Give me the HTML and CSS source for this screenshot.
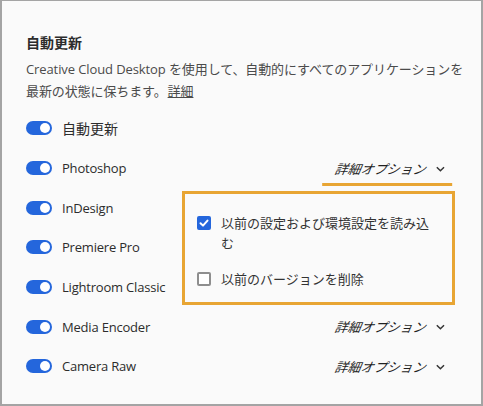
FILE: index.html
```html
<!DOCTYPE html>
<html lang="ja">
<head>
<meta charset="utf-8">
<link rel="stylesheet" href="styles.css">
</head>
<body>
<div class="panel">
  <h2 class="title">自動更新</h2>
  <p class="desc">Creative Cloud Desktop を使用して、自動的にすべてのアプリケーションを<br>最新の状態に保ちます。<a class="more">詳細</a></p>
  <ul class="rows">
    <li class="row"><span class="toggle"></span><span class="label jp">自動更新</span></li>
    <li class="row"><span class="toggle"></span><span class="label">Photoshop</span><span class="opts active">詳細オプション<svg class="chev" viewBox="0 0 10 6"><path d="M1 1 L5 5 L9 1"/></svg></span></li>
    <li class="row"><span class="toggle"></span><span class="label">InDesign</span></li>
    <li class="row"><span class="toggle"></span><span class="label">Premiere Pro</span></li>
    <li class="row"><span class="toggle"></span><span class="label">Lightroom Classic</span></li>
    <li class="row"><span class="toggle"></span><span class="label">Media Encoder</span><span class="opts">詳細オプション<svg class="chev" viewBox="0 0 10 6"><path d="M1 1 L5 5 L9 1"/></svg></span></li>
    <li class="row"><span class="toggle"></span><span class="label">Camera Raw</span><span class="opts">詳細オプション<svg class="chev" viewBox="0 0 10 6"><path d="M1 1 L5 5 L9 1"/></svg></span></li>
  </ul>
  <div class="popup">
    <div class="check-row">
      <span class="box checked"><svg viewBox="0 0 14 14"><path d="M3.5 7.2 L6 9.6 L10.5 4.6"/></svg></span>
      <span class="ctext">以前の設定および環境設定を読み込む</span>
    </div>
    <div class="check-row">
      <span class="box"></span>
      <span class="ctext">以前のバージョンを削除</span>
    </div>
  </div>
</div>
</body>
</html>
```
FILE: styles.css
```css
* { box-sizing: border-box; }
html, body { margin: 0; padding: 0; background: #fafafa; }
.panel {
  position: relative;
  width: 483px;
  height: 406px;
  background: #fafafa;
  border: 1px solid #a4a4a4;
  border-left-width: 2px;
  border-right-width: 2px;
  border-bottom-width: 2px;
  padding: 30px 0 0 24px;
  font-family: "Open Sans", "Noto Sans CJK JP", sans-serif;
  color: #2c2c2c;
}
.title {
  margin: 0;
  font-family: "Noto Sans CJK JP", sans-serif;
  font-size: 14px;
  font-weight: 700;
  line-height: 22px;
  color: #2c2c2c;
}
.desc {
  margin: 5px 0 0 0;
  width: 450px;
  font-size: 13px;
  line-height: 22px;
  color: #4b4b4b;
  font-family: "Open Sans", "Noto Sans CJK JP", sans-serif;
  letter-spacing: -0.1px;
}
.more { display: inline-block; text-decoration: underline; color: #4b4b4b; margin-left: 1px; }
.rows {
  list-style: none;
  margin: 6.5px 0 0 0;
  padding: 0;
}
.row {
  display: flex;
  align-items: center;
  height: 39.7px;
  padding-right: 36px;
}
.toggle {
  position: relative;
  width: 26px;
  height: 14px;
  border-radius: 7px;
  background: #2466dc;
  flex: none;
}
.toggle::after {
  content: "";
  position: absolute;
  right: 2px;
  top: 2px;
  width: 10px;
  height: 10px;
  border-radius: 50%;
  background: #fff;
}
.label {
  margin-left: 10px;
  font-size: 13px;
  color: #2c2c2c;
  letter-spacing: -0.2px;
}
.label.jp { font-family: "Noto Sans CJK JP", sans-serif; font-size: 14px; letter-spacing: 0; }
.opts {
  margin-left: auto;
  position: relative;
  display: flex;
  align-items: center;
  font-family: "Noto Sans CJK JP", sans-serif;
  font-style: italic;
  font-size: 13px;
  color: #1f1f1f;
  transform: skewX(-10deg);
}
.chev {
  width: 9px;
  height: 6px;
  margin-left: 10px;
  transform: skewX(10deg);
}
.chev path { fill: none; stroke: #333; stroke-width: 1.6; }
.opts.active::after {
  content: "";
  position: absolute;
  left: -10px;
  right: -10px;
  bottom: -8px;
  height: 3px;
  background: #e8a533;
  transform: skewX(10deg);
}
.popup {
  position: absolute;
  left: 180px;
  top: 190px;
  width: 273px;
  height: 114px;
  border: 3px solid #e8a533;
  background: #fafafa;
  padding: 18.5px 12px 0 12px;
  font-family: "Noto Sans CJK JP", sans-serif;
  font-size: 13px;
  color: #333;
}
.check-row {
  display: flex;
  align-items: flex-start;
  line-height: 20px;
}
.check-row + .check-row { margin-top: 16.5px; }
.box {
  flex: none;
  width: 14px;
  height: 14px;
  margin-top: 3px;
  margin-right: 10px;
  border: 2px solid #8e8e8e;
  border-radius: 2px;
  background: #fff;
  display: flex;
}
.box.checked { background: #2466dc; border-color: #2466dc; }
.box svg { width: 14px; height: 14px; margin: -2px; }
.box svg path { fill: none; stroke: #fff; stroke-width: 2; stroke-linecap: round; stroke-linejoin: round; }
.ctext { width: 218px; }
```
